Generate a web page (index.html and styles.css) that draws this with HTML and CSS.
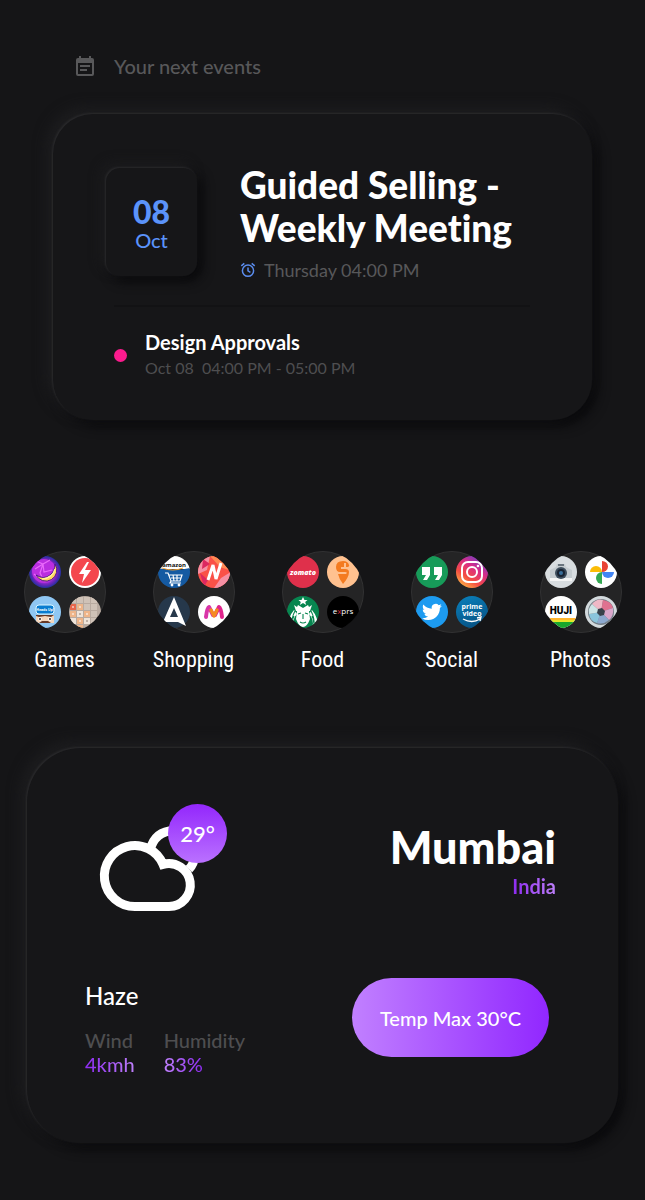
FILE: index.html
```html
<!DOCTYPE html>
<html lang="en">
<head>
    <meta charset="UTF-8">
    <meta name="viewport" content="width=device-width, initial-scale=1.0">
    <title>Home</title>
    <link rel="stylesheet" href="styles.css">
</head>
<body>
    <header class="header">
        <svg class="header-icon" viewBox="0 0 18 20" aria-hidden="true">
            <path fill="#58585a" fill-rule="evenodd" d="M3 0h2v2h8V0h2v2h1a2 2 0 0 1 2 2v14a2 2 0 0 1-2 2H2a2 2 0 0 1-2-2V4a2 2 0 0 1 2-2h1zM2 7v11h14V7zM4 9h10v2H4zm0 4h7v2H4z"/>
        </svg>
        <h2 class="header-title">Your next events</h2>
    </header>

    <!-- Events -->
    <section class="card events">
        <div class="next-event">
            <div class="date-tile">
                <span class="date-day">08</span>
                <span class="date-month">Oct</span>
            </div>
            <div class="next-info">
                <h1 class="next-title">Guided Selling - Weekly Meeting</h1>
                <div class="next-time">
                    <svg class="clock" viewBox="0 0 16 16" fill="none" stroke="#5b8def" stroke-width="1.5" aria-hidden="true">
                        <circle cx="8" cy="8.7" r="5.6"/>
                        <path d="M8 5.5v3.4l2.4 1.5M1.3 3.9l3-2.5M14.7 3.9l-3-2.5"/>
                    </svg>
                    <span>Thursday 04:00 PM</span>
                </div>
            </div>
        </div>
        <div class="later-event">
            <span class="dot"></span>
            <div>
                <h3 class="later-title">Design Approvals</h3>
                <p class="later-time">Oct 08&nbsp; 04:00 PM - 05:00 PM</p>
            </div>
        </div>
    </section>

    <!-- App folders -->
    <nav class="folders">
        <a class="folder" href="#games">
            <svg class="folder-icon" viewBox="0 0 82 82" aria-hidden="true">
                <defs>
                    <clipPath id="ring"><circle cx="41" cy="41" r="41"/></clipPath>
                    <clipPath id="tl"><circle cx="21" cy="21" r="16"/></clipPath>
                    <clipPath id="tr"><circle cx="61" cy="21" r="16"/></clipPath>
                    <clipPath id="bl"><circle cx="21" cy="61" r="16"/></clipPath>
                    <clipPath id="br"><circle cx="61" cy="61" r="16"/></clipPath>
                    <radialGradient id="orb"><stop offset="0.5" stop-color="#c536e8"/><stop offset="0.8" stop-color="#6a25b8"/><stop offset="1" stop-color="#23319e"/></radialGradient>
                </defs>
                <circle class="ring" cx="41" cy="41" r="40.5"/>
                <g clip-path="url(#ring)">
                    <circle cx="21" cy="21" r="16" fill="url(#orb)"/>
                    <circle cx="20" cy="20" r="12" fill="#ba2ee0"/>
                    <path d="M12 10l7 3 7-4M11 18l8-5 1 8 8-2M10 23l7 6M19 13l-3 9 4 8" fill="none" stroke="#e868fa" stroke-width="1.2"/>
                    <path d="M31 13a11 11 0 1 1-19 11q8 5 14 0 5-4 5-11z" fill="#ffd65c" stroke="#4b168e"/>
                    <path d="M31 18q-2 9-13 10" fill="none" stroke="#fff0a2" stroke-width="1.2"/>
                    <circle cx="61" cy="21" r="16" fill="#fff"/>
                    <circle cx="61" cy="21" r="14" fill="#f4474e"/>
                    <path d="M63 11l-8 12h5l-2 9 9-13h-6l4-8z" fill="#fff"/>
                    <g clip-path="url(#bl)">
                        <path d="M5 45h32v32H5z" fill="#8fc7f3"/>
                        <rect x="12" y="54" width="18" height="9" rx="3" fill="#087cd0" stroke="#dcf6ff"/>
                        <text class="tiny" x="21" y="60" font-size="3.5" fill="#fff">Heads Up!</text>
                        <path d="M12 64h18v8H12z" fill="#f5d6bb"/>
                        <path d="M12 64h18l-3 2-6-1-6 1-3-1zM15 72l3-2h6l3 2z" fill="#663a28"/>
                        <circle cx="16" cy="68" r="1.8" fill="#fff"/><circle cx="26" cy="68" r="1.8" fill="#fff"/>
                        <circle cx="16" cy="68" r="1" fill="#3d2923"/><circle cx="26" cy="68" r="1" fill="#3d2923"/>
                    </g>
                    <g clip-path="url(#br)">
                        <path d="M45 45h32v32H45z" fill="#b8aaa0"/>
                        <path d="M46 46h6v6h-6zM53 46h6v6h-6zM60 46h6v6h-6zM67 46h6v6h-6zM60 53h6v6h-6zM67 53h6v6h-6zM67 60h6v6h-6zM67 67h6v6h-6z" fill="#cfc2b7"/>
                        <path d="M46 53h6v6h-6z" fill="#e8664b"/>
                        <path d="M53 53h6v6h-6zM46 60h6v6h-6zM60 60h6v6h-6zM53 67h6v6h-6zM53 74h6v4h-6z" fill="#eeb589"/>
                        <path d="M53 60h6v6h-6zM46 67h6v6h-6zM60 67h6v6h-6z" fill="#eee4da"/>
                        <path d="M49 55v2M56 55v2M49 62v2M63 62v2M56 69v2" stroke="#fff"/>
                        <path d="M56 62v2M63 69v2" stroke="#8f7f72"/>
                    </g>
                </g>
            </svg>
            <span class="folder-name">Games</span>
        </a>

        <a class="folder" href="#shopping">
            <svg class="folder-icon" viewBox="0 0 82 82" aria-hidden="true">
                <circle class="ring" cx="41" cy="41" r="40.5"/>
                <g clip-path="url(#ring)">
                    <g clip-path="url(#tl)">
                        <path d="M5 5h32v13H5z" fill="#fff"/>
                        <path d="M5 17q16 4 32 0v20H5z" fill="#155aa2"/>
                        <path d="M9 17q11 4 21 0" fill="none" stroke="#f3a437"/>
                        <text class="tiny" x="21" y="16" font-size="6" fill="#111">amazon</text>
                        <path d="M12 22h3l3 8h9l2-6H16M18 27h10M20 24l1 6M24 24v6M18 30l-1 2h11" fill="none" stroke="#fff" stroke-width="1.2"/>
                        <circle cx="19" cy="34" r="1.4" fill="#fff"/><circle cx="26" cy="34" r="1.4" fill="#fff"/>
                    </g>
                    <g clip-path="url(#tr)">
                        <path d="M45 5h32v32H45z" fill="#fa5148"/>
                        <path d="M45 5h12l-3 14-9 4zM68 27l10-6v16H61z" fill="#f690a4"/>
                        <path d="M57 5l12 1 7 13-9-3z" fill="#ff8a54"/>
                        <path d="M47 22l8 7-4 7zM50 8l7 5-8 5z" fill="#dc2860"/>
                        <path d="M55 29l5-15 3 14 5-16" fill="none" stroke="#fff" stroke-width="3" stroke-linejoin="bevel"/>
                    </g>
                    <circle cx="21" cy="61" r="16" fill="#26384b"/>
                    <path d="M21 46l12 29-8-4H10zM21 57l-4 9h8z" fill="#fff" fill-rule="evenodd"/>
                    <circle cx="61" cy="61" r="16" fill="#fff"/>
                    <g fill="none" stroke-width="4" stroke-linecap="round" stroke-linejoin="round">
                        <path d="M53 66q1-9 3-10l4 8" stroke="#d935a8"/>
                        <path d="M69 66q-1-9-3-10l-4 8" stroke="#e0248c"/>
                        <path d="M58 59l3 6 3-6" stroke="#f58b22" stroke-width="3.5"/>
                    </g>
                </g>
            </svg>
            <span class="folder-name">Shopping</span>
        </a>

        <a class="folder" href="#food">
            <svg class="folder-icon" viewBox="0 0 82 82" aria-hidden="true">
                <circle class="ring" cx="41" cy="41" r="40.5"/>
                <g clip-path="url(#ring)">
                    <circle cx="21" cy="21" r="16" fill="#df304b"/>
                    <text class="tiny zomato" x="21" y="24" font-size="7" fill="#fff">zomato</text>
                    <circle cx="61" cy="21" r="16" fill="#ffc18f"/>
                    <path d="M67 14q-1-4-6-4-7 0-7 6 0 5 4 5h5q3 0 1 2h-8q1 5 5 10 6-7 6-12 0-3-4-3h-4v-2h3v-4h2v4q4 0 3-2z" fill="#f47b20"/>
                    <g clip-path="url(#bl)">
                        <path d="M5 45h32v32H5z" fill="#078650"/>
                        <path d="M21 46l1.5 3h3l-2.3 2 1 3-3.2-2-3.2 2 1-3-2.3-2h3zM12 54l3 2 1-2 5 3 5-3 1 2 3-2-2 6H14zM12 59q-6 7-6 17h6q-2-8 3-13zM30 59q6 7 6 17h-6q2-8-3-13z" fill="#fff"/>
                        <path d="M15 60h12l1 8q-3 8-7 8t-7-8z" fill="#fff"/>
                        <path d="M16 63l3-1M23 62l3 1M21 63v5M18 71q3 2 6 0M13 60q-4 7-3 16M29 60q4 7 3 16M12 65q-3 5 1 11M30 65q3 5-1 11" fill="none" stroke="#078650" stroke-width="1.1"/>
                    </g>
                    <circle cx="61" cy="61" r="16" fill="#000"/>
                    <text class="tiny exprs" x="61" y="63" font-size="8" fill="#fff">e<tspan fill="#d52032">x</tspan>prs</text>
                </g>
            </svg>
            <span class="folder-name">Food</span>
        </a>

        <a class="folder" href="#social">
            <svg class="folder-icon" viewBox="0 0 82 82" aria-hidden="true">
                <defs>
                    <linearGradient id="insta" x1="0.1" y1="1" x2="0.8" y2="0"><stop stop-color="#ffcc45"/><stop offset="0.35" stop-color="#f44c43"/><stop offset="0.65" stop-color="#d82b88"/><stop offset="1" stop-color="#5a45d2"/></linearGradient>
                    <linearGradient id="prime" x2="0.4" y2="1"><stop stop-color="#0a81bd"/><stop offset="1" stop-color="#075587"/></linearGradient>
                </defs>
                <circle class="ring" cx="41" cy="41" r="40.5"/>
                <g clip-path="url(#ring)">
                    <circle cx="21" cy="21" r="16" fill="#179b59"/>
                    <path d="M11 16h8v8l-3 5h-4l3-5h-4zM23 16h8v8l-3 5h-4l3-5h-4z" fill="#fff"/>
                    <circle cx="61" cy="21" r="16" fill="url(#insta)"/>
                    <g fill="none" stroke="#fff" stroke-width="2">
                        <rect x="51" y="11" width="20" height="20" rx="6"/>
                        <circle cx="61" cy="21" r="5"/>
                    </g>
                    <circle cx="67" cy="15" r="1.3" fill="#fff"/>
                    <circle cx="21" cy="61" r="16" fill="#1d9bf0"/>
                    <path transform="translate(11 51) scale(.83)" fill="#fff" d="M23.95 4.57a10 10 0 0 1-2.82.77 4.96 4.96 0 0 0 2.16-2.72c-.95.55-2 .95-3.13 1.18a4.92 4.92 0 0 0-8.38 4.48C7.69 8.09 4.07 6.13 1.64 3.16a4.82 4.82 0 0 0-.67 2.48c0 1.71.87 3.21 2.19 4.1a4.9 4.9 0 0 1-2.23-.62v.06a4.92 4.92 0 0 0 3.95 4.83 5 5 0 0 1-2.21.08 4.94 4.94 0 0 0 4.6 3.42A9.87 9.87 0 0 1 0 19.54a14 14 0 0 0 7.55 2.21c9.05 0 14-7.5 14-13.99 0-.21 0-.42-.02-.63a9.9 9.9 0 0 0 2.42-2.56z"/>
                    <circle cx="61" cy="61" r="16" fill="url(#prime)"/>
                    <text class="tiny" x="61" y="58" font-size="7" fill="#fff">prime</text>
                    <text class="tiny" x="61" y="65" font-size="7" fill="#fff">video</text>
                    <path d="M52 68q9 5 17 0M66 67l4-1-1 4" fill="none" stroke="#fff" stroke-width="1.3"/>
                </g>
            </svg>
            <span class="folder-name">Social</span>
        </a>

        <a class="folder" href="#photos">
            <svg class="folder-icon" viewBox="0 0 82 82" aria-hidden="true">
                <circle class="ring" cx="41" cy="41" r="40.5"/>
                <g clip-path="url(#ring)">
                    <circle cx="21" cy="21" r="16" fill="#d8dde0"/>
                    <path d="M10 19l6-3 1-3h8l1 3 6 3v10H10z" fill="#c5ccd0"/>
                    <path d="M10 27h22v3H10z" fill="#f4f5f5"/>
                    <rect x="18" y="13" width="6" height="2" fill="#69747d"/>
                    <circle cx="21" cy="22" r="6" fill="#3d4d5c"/><circle cx="21" cy="22" r="4" fill="#182332"/><circle cx="21" cy="22" r="2" fill="#396f9b"/>
                    <circle cx="61" cy="21" r="16" fill="#fff"/>
                    <path d="M62 21V10a6 5.5 0 0 1 0 11z" fill="#e94335"/>
                    <path d="M62 21h12a6 6 0 0 1-12 0z" fill="#4285f4"/>
                    <path d="M62 21v12a6 6 0 0 1 0-12z" fill="#34a853"/>
                    <path d="M62 21H50a6 6 0 0 1 12 0z" fill="#fbbc05"/>
                    <g clip-path="url(#bl)">
                        <path d="M5 45h32v32H5z" fill="#fff"/>
                        <path d="M5 67h32v2H5z" fill="#ffb52d"/><path d="M5 69h32v2H5z" fill="#e5e629"/><path d="M5 71h32v7H5z" fill="#18a72c"/>
                        <text class="tiny huji" x="21" y="63" font-size="10" fill="#000">HUJI</text>
                    </g>
                    <circle cx="61" cy="61" r="16" fill="#d3dadd"/>
                    <circle cx="61" cy="61" r="13" fill="#707b84"/>
                    <path d="M61 61l-9-8q5-6 11-4z" fill="#efb8c6"/><path d="M61 61l2-12q8 1 10 8z" fill="#df7190"/>
                    <path d="M61 61l12-4q1 8-4 12z" fill="#d9a7cb"/><path d="M61 61l8 8q-6 5-12 3z" fill="#8ca8ce"/>
                    <path d="M61 61l-4 11q-7-2-8-9z" fill="#8ac5dc"/><path d="M61 61l-12 2q-1-6 3-10z" fill="#cde5e6"/>
                    <path d="M58 58l4-1 3 3-1 4-4 1-3-3z" fill="#37404a"/>
                </g>
            </svg>
            <span class="folder-name">Photos</span>
        </a>
    </nav>

    <!-- Weather -->
    <section class="card weather">
        <div class="weather-row">
            <div class="weather-icon">
                <svg class="cloud" viewBox="0 0 142 108" fill="none" stroke="#fff" stroke-width="9" aria-hidden="true">
                    <path d="M50 102.5A30.5 30.5 0 1 1 78 60.3A21.5 21.5 0 1 1 84 102.5Z"/>
                    <path d="M65 46Q70 27 89 26.500M104 65Q109 60 109 54"/>
                </svg>
                <span class="temp-badge">29°</span>
            </div>
            <div class="place">
                <h1 class="city">Mumbai</h1>
                <span class="country purple">India</span>
            </div>
        </div>
        <div class="weather-row details">
            <div>
                <h3 class="condition">Haze</h3>
                <dl class="stats">
                    <div>
                        <dt>Wind</dt>
                        <dd class="purple">4kmh</dd>
                    </div>
                    <div>
                        <dt>Humidity</dt>
                        <dd class="purple reverse">83%</dd>
                    </div>
                </dl>
            </div>
            <button class="temp-button" type="button">Temp Max 30°C</button>
        </div>
    </section>
</body>
</html>
```
FILE: styles.css
```css
* {
    margin: 0;
    padding: 0;
    box-sizing: border-box;
}

body {
    background-color: #151517;
    color: #fff;
    font-family: Lato, 'Open Sans', sans-serif;
    font-size: 20px;
    font-weight: 500;
    line-height: 24px;
    font-variant-ligatures: none;
}

.header {
    display: flex;
    align-items: center;
    gap: 20px;
    padding: 54px 76px 36px;
}

.header-icon {
    width: 18px;
    height: 20px;
}

.header-title {
    color: #58585a;
    font-size: 20px;
    font-weight: 500;
}

.card {
    background-color: #161618;
    box-shadow: -1px -1px 2px #2a2a2c, -6px -6px 14px #1e1e20, 6px 6px 12px #0a0a0c;
}

/* Events */
.events {
    margin: 0 53px;
    padding: 49px 62px 40px 53px;
    border-radius: 40px;
}

.next-event {
    display: flex;
    gap: 43px;
}

.date-tile {
    display: flex;
    flex-direction: column;
    align-items: center;
    justify-content: center;
    width: 91px;
    height: 108px;
    margin-top: 5px;
    padding-top: 4px;
    border-radius: 14px;
    color: #5b93fa;
    background-color: #161618;
    box-shadow: -1px -1px 2px #29292b, -5px -5px 12px #1c1c1e, 5px 5px 12px #09090b;
}

.date-day {
    font-size: 32px;
    line-height: 32px;
    font-weight: 900;
}

.date-month {
    font-size: 20px;
}

.next-info {
    flex: 1;
}

.next-title {
    font-size: 37px;
    line-height: 43px;
    font-weight: 900;
    max-width: 290px;
}

.next-time {
    display: flex;
    align-items: center;
    gap: 8px;
    margin-top: 9px;
    color: #58585a;
    font-size: 18px;
    font-weight: 400;
}

.clock {
    width: 16px;
    height: 16px;
}

.later-event {
    display: flex;
    align-items: center;
    gap: 18px;
    margin: 23px 0 0 8px;
    padding-top: 23px;
    border-top: 2px solid #121214;
}

.dot {
    width: 13px;
    height: 13px;
    border-radius: 50%;
    background-color: #fb1b8d;
}

.later-title {
    font-size: 20px;
    font-weight: 700;
}

.later-time {
    margin-top: 2px;
    color: #4e4e50;
    font-size: 16px;
    font-weight: 400;
}

/* App folders */
.folders {
    display: grid;
    grid-template-columns: repeat(5, 1fr);
    margin-top: 131px;
}

.folder {
    display: flex;
    flex-direction: column;
    align-items: center;
    gap: 15px;
    color: #fff;
    text-decoration: none;
}

.folder-icon {
    width: 82px;
    height: 82px;
}

.ring {
    fill: #242425;
    stroke: #323233;
}

.folder-name {
    font-family: 'Roboto Condensed', 'Liberation Sans Narrow', Roboto, sans-serif;
    font-size: 22px;
    font-weight: 400;
}

.tiny {
    font-family: 'Open Sans', sans-serif;
    font-weight: 700;
    text-anchor: middle;
}

.zomato {
    font-weight: 800;
    font-style: italic;
}

.exprs {
    font-weight: 400;
}

.huji {
    font-family: Roboto, sans-serif;
    font-weight: 900;
}

/* Weather */
.weather {
    margin: 76px 27px 57px;
    padding: 56px 62px 67px 58px;
    border-radius: 54px;
}

.weather-row {
    display: flex;
    justify-content: space-between;
}

.weather-icon {
    position: relative;
}

.cloud {
    display: block;
    width: 142px;
    height: 108px;
}

.temp-badge {
    position: absolute;
    top: 0;
    right: 0;
    width: 59px;
    height: 59px;
    border-radius: 50%;
    background: linear-gradient(#9327fc, #ba71ff);
    font-size: 22px;
    line-height: 59px;
    text-align: center;
}

.place {
    display: flex;
    flex-direction: column;
    align-items: flex-end;
    padding-top: 16px;
}

.city {
    font-size: 45px;
    line-height: 54px;
    font-weight: 900;
}

.country {
    font-weight: 700;
}

.purple {
    width: fit-content;
    color: transparent;
    background: linear-gradient(90deg, #8c2af0, #be80fa);
    background-clip: text;
    -webkit-background-clip: text;
}

.reverse {
    background-image: linear-gradient(90deg, #be80fa, #8c2af0);
}

.details {
    margin-top: 66px;
    padding-right: 7px;
}

.condition {
    margin-top: 4px;
    font-size: 24px;
    line-height: 28px;
    font-weight: 500;
}

.stats {
    display: flex;
    gap: 29px;
    margin-top: 18px;
}

.stats dt {
    color: #4e4e50;
}

.temp-button {
    width: 197px;
    height: 79px;
    border: none;
    border-radius: 40px;
    background: linear-gradient(90deg, #c180ff, #9127ff);
    color: #fff;
    font-family: inherit;
    font-size: 20px;
    font-weight: 500;
    cursor: pointer;
}
```
